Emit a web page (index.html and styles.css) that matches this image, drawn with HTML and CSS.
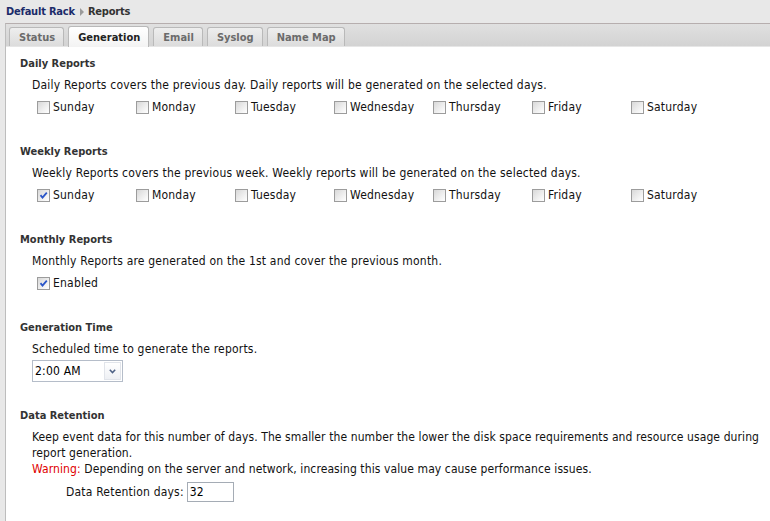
FILE: index.html
```html
<!DOCTYPE html>
<html>
<head>
	<meta charset="utf-8">
	<title>Reports</title>
	<link rel="stylesheet" href="styles.css">
</head>
<body>
	<div class="crumb">
		<a href="javascript:;" class="crumbLink">Default Rack</a>
		<span class="crumbSep"></span>
		<span class="crumbCur">Reports</span>
	</div>
	<div class="panel">
		<ul class="tabs">
			<li>Status</li>
			<li class="active">Generation</li>
			<li>Email</li>
			<li>Syslog</li>
			<li>Name Map</li>
		</ul>
		<div class="content">
			<div class="section">
				<h3>Daily Reports</h3>
				<p class="desc">Daily Reports covers the previous day. Daily reports will be generated on the selected days.</p>
				<div class="days">
					<label class="day"><span class="cb"></span>Sunday</label>
					<label class="day"><span class="cb"></span>Monday</label>
					<label class="day"><span class="cb"></span>Tuesday</label>
					<label class="day"><span class="cb"></span>Wednesday</label>
					<label class="day"><span class="cb"></span>Thursday</label>
					<label class="day"><span class="cb"></span>Friday</label>
					<label class="day"><span class="cb"></span>Saturday</label>
				</div>
			</div>
			<div class="section">
				<h3>Weekly Reports</h3>
				<p class="desc">Weekly Reports covers the previous week. Weekly reports will be generated on the selected days.</p>
				<div class="days">
					<label class="day"><span class="cb checked"><svg width="11" height="11" viewBox="0 0 11 11"><path d="M2.5 5.2 L4.5 7.6 L8.8 2.6" fill="none" stroke="#2a55c8" stroke-width="1.8"/></svg></span>Sunday</label>
					<label class="day"><span class="cb"></span>Monday</label>
					<label class="day"><span class="cb"></span>Tuesday</label>
					<label class="day"><span class="cb"></span>Wednesday</label>
					<label class="day"><span class="cb"></span>Thursday</label>
					<label class="day"><span class="cb"></span>Friday</label>
					<label class="day"><span class="cb"></span>Saturday</label>
				</div>
			</div>
			<div class="section">
				<h3>Monthly Reports</h3>
				<p class="desc">Monthly Reports are generated on the 1st and cover the previous month.</p>
				<div class="days">
					<label class="day"><span class="cb checked"><svg width="11" height="11" viewBox="0 0 11 11"><path d="M2.5 5.2 L4.5 7.6 L8.8 2.6" fill="none" stroke="#2a55c8" stroke-width="1.8"/></svg></span>Enabled</label>
				</div>
			</div>
			<div class="section">
				<h3>Generation Time</h3>
				<p class="desc">Scheduled time to generate the reports.</p>
				<div class="select">
					<span class="selectText">2:00 AM</span>
					<span class="selectBtn"><svg width="7" height="5" viewBox="0 0 7 5"><path d="M0.8 0.8 L3.5 3.6 L6.2 0.8" fill="none" stroke="#4d6185" stroke-width="1.5"/></svg></span>
				</div>
			</div>
			<div class="section">
				<h3>Data Retention</h3>
				<div class="desc retention">
					<p>Keep event data for this number of days. The smaller the number the lower the disk space requirements and resource usage during report generation.</p>
					<p><span class="warn">Warning:</span> Depending on the server and network, increasing this value may cause performance issues.</p>
				</div>
				<div class="field">
					<span>Data Retention days:</span>
					<input type="text" class="num" value="32">
				</div>
			</div>
		</div>
	</div>
</body>
</html>
```

FILE: styles.css
```css
* {
	padding: 0px;
	margin: 0px;
}
body {
	background: #e8e8e8;
	font: 12px "DejaVu Sans Condensed", "DejaVu Sans", sans-serif;
	letter-spacing: 0.2px;
	color: #111;
}
.crumb {
	height: 23px;
	padding-left: 6px;
	display: flex;
	align-items: center;
	font-size: 11px;
	font-weight: bold;
	letter-spacing: -0.2px;
}
.crumbLink {
	color: #1b2b6a;
	text-decoration: none;
}
.crumbSep {
	width: 0;
	height: 0;
	border-left: 4px solid #9a9a9a;
	border-top: 4px solid transparent;
	border-bottom: 4px solid transparent;
	margin: 0 4px 0 5px;
}
.crumbCur {
	color: #333;
}
.panel {
	margin-left: 5px;
	border-left: 1px solid #bdbdbd;
	border-top: 1px solid #b6aeae;
	background: #fff;
	min-height: calc(100vh - 24px);
}
.tabs {
	display: flex;
	align-items: flex-end;
	gap: 4px;
	height: 22px;
	padding-left: 3px;
	list-style: none;
	background: linear-gradient(#e0e0e0, #d3d3d3);
	border-bottom: 1px solid #e6e6e6;
}
.tabs li {
	height: 18px;
	line-height: 19px;
	padding: 0 8px 0 9px;
	border: 1px solid #b9b9b9;
	border-bottom: none;
	border-radius: 3px 3px 0 0;
	background: linear-gradient(#eeeeee, #dcdcdc);
	color: #6b6b6b;
	font-size: 11px;
	font-weight: bold;
	letter-spacing: 0;
}
.tabs li.active {
	height: 20px;
	line-height: 21px;
	margin-bottom: -1px;
	background: linear-gradient(#ffffff, #f3f3f3);
	color: #222;
}
.content {
	padding: 5px 0 0 14px;
}
.section {
	margin-bottom: 22px;
}
.section h3 {
	font-size: 11px;
	line-height: 22px;
	color: #333;
	letter-spacing: 0;
	padding-top: 1px;
	height: 21px;
}
.desc {
	line-height: 16px;
	padding: 3px 8px 3px 12px;
}
.retention {
	padding-right: 0;
	letter-spacing: 0.1px;
}
.days {
	display: flex;
	height: 22px;
	align-items: center;
	padding-left: 17px;
}
.day {
	width: 99px;
	display: flex;
	align-items: center;
}
.cb {
	width: 11px;
	height: 11px;
	border: 1px solid #9c9c9c;
	background: linear-gradient(135deg, #d8d8d8, #f4f4f4 70%, #ffffff);
	margin-right: 3px;
	display: flex;
}
.select {
	display: flex;
	width: 89px;
	height: 20px;
	margin-left: 12px;
	border: 1px solid #b5bdc9;
	background: #fff;
}
.selectText {
	flex: 1;
	line-height: 20px;
	padding-left: 2px;
	color: #000;
}
.selectBtn {
	width: 15px;
	margin: 1px;
	border: 1px solid #e1e4ea;
	background: linear-gradient(#ffffff, #eef0f4);
	display: flex;
	align-items: center;
	justify-content: center;
}
.warn {
	color: #e00000;
}
.field {
	display: flex;
	align-items: center;
	height: 24px;
	padding-left: 46px;
}
.num {
	width: 41px;
	height: 18px;
	margin-left: 3px;
	padding: 0 2px;
	border: 1px solid #a5acb5;
	font: 12px "DejaVu Sans Condensed", "DejaVu Sans", sans-serif;
	letter-spacing: 0.2px;
	color: #000;
}
```
